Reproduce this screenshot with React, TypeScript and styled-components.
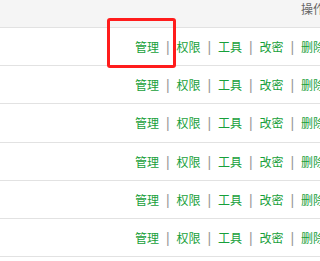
import React from "react";
import styled, { createGlobalStyle } from "styled-components";

const actions = ["管理", "权限", "工具", "改密", "删除"];
const rowCount = 6;

const GlobalStyle = createGlobalStyle`
  html, body {
    margin: 0;
    padding: 0;
    background: #ffffff;
    overflow: hidden;
  }
  body {
    font-family: "Noto Sans CJK SC", "Liberation Sans", sans-serif;
    font-size: 12px;
  }
`;

const Table = styled.div`
  width: 320px;
  height: 261px;
  overflow: hidden;
  position: relative;
`;

const HeaderRow = styled.div`
  display: flex;
  align-items: center;
  height: 27px;
  background: #f5f5f5;
  border-bottom: 1px solid #e2e2e2;
`;

const HeaderCell = styled.div`
  padding-left: 301px;
  padding-bottom: 9px;
  white-space: nowrap;
  color: #666666;
  line-height: 12px;
`;

const Row = styled.div`
  display: flex;
  align-items: center;
  height: 37.2px;
  border-bottom: 1px solid #e2e2e2;
`;

const OpsCell = styled.div`
  display: flex;
  align-items: center;
  padding-left: 135px;
  padding-top: 1px;
  white-space: nowrap;
  flex-shrink: 0;
`;

const Action = styled.a`
  color: #17a03a;
  text-decoration: none;
  line-height: 14px;
  width: 24px;
  flex-shrink: 0;
  cursor: pointer;
`;

const Separator = styled.span`
  width: 17.5px;
  flex-shrink: 0;
  text-align: center;
  color: #999999;
  font-family: "Liberation Sans", sans-serif;
  font-size: 14px;
  line-height: 14px;
`;

const Highlight = styled.div`
  position: absolute;
  left: 107px;
  top: 18px;
  width: 69px;
  height: 50px;
  box-sizing: border-box;
  border: 3px solid #ff1c1c;
  border-radius: 3px;
  pointer-events: none;
`;

export default function App() {
  return (
    <>
      <GlobalStyle />
      <Table>
        <HeaderRow>
          <HeaderCell>操作</HeaderCell>
        </HeaderRow>
        {Array.from({ length: rowCount }).map((_, i) => (
          <Row key={i}>
            <OpsCell>
              {actions.map((label, j) => (
                <React.Fragment key={label}>
                  {j > 0 && <Separator>|</Separator>}
                  <Action>{label}</Action>
                </React.Fragment>
              ))}
            </OpsCell>
          </Row>
        ))}
        <Highlight />
      </Table>
    </>
  );
}
